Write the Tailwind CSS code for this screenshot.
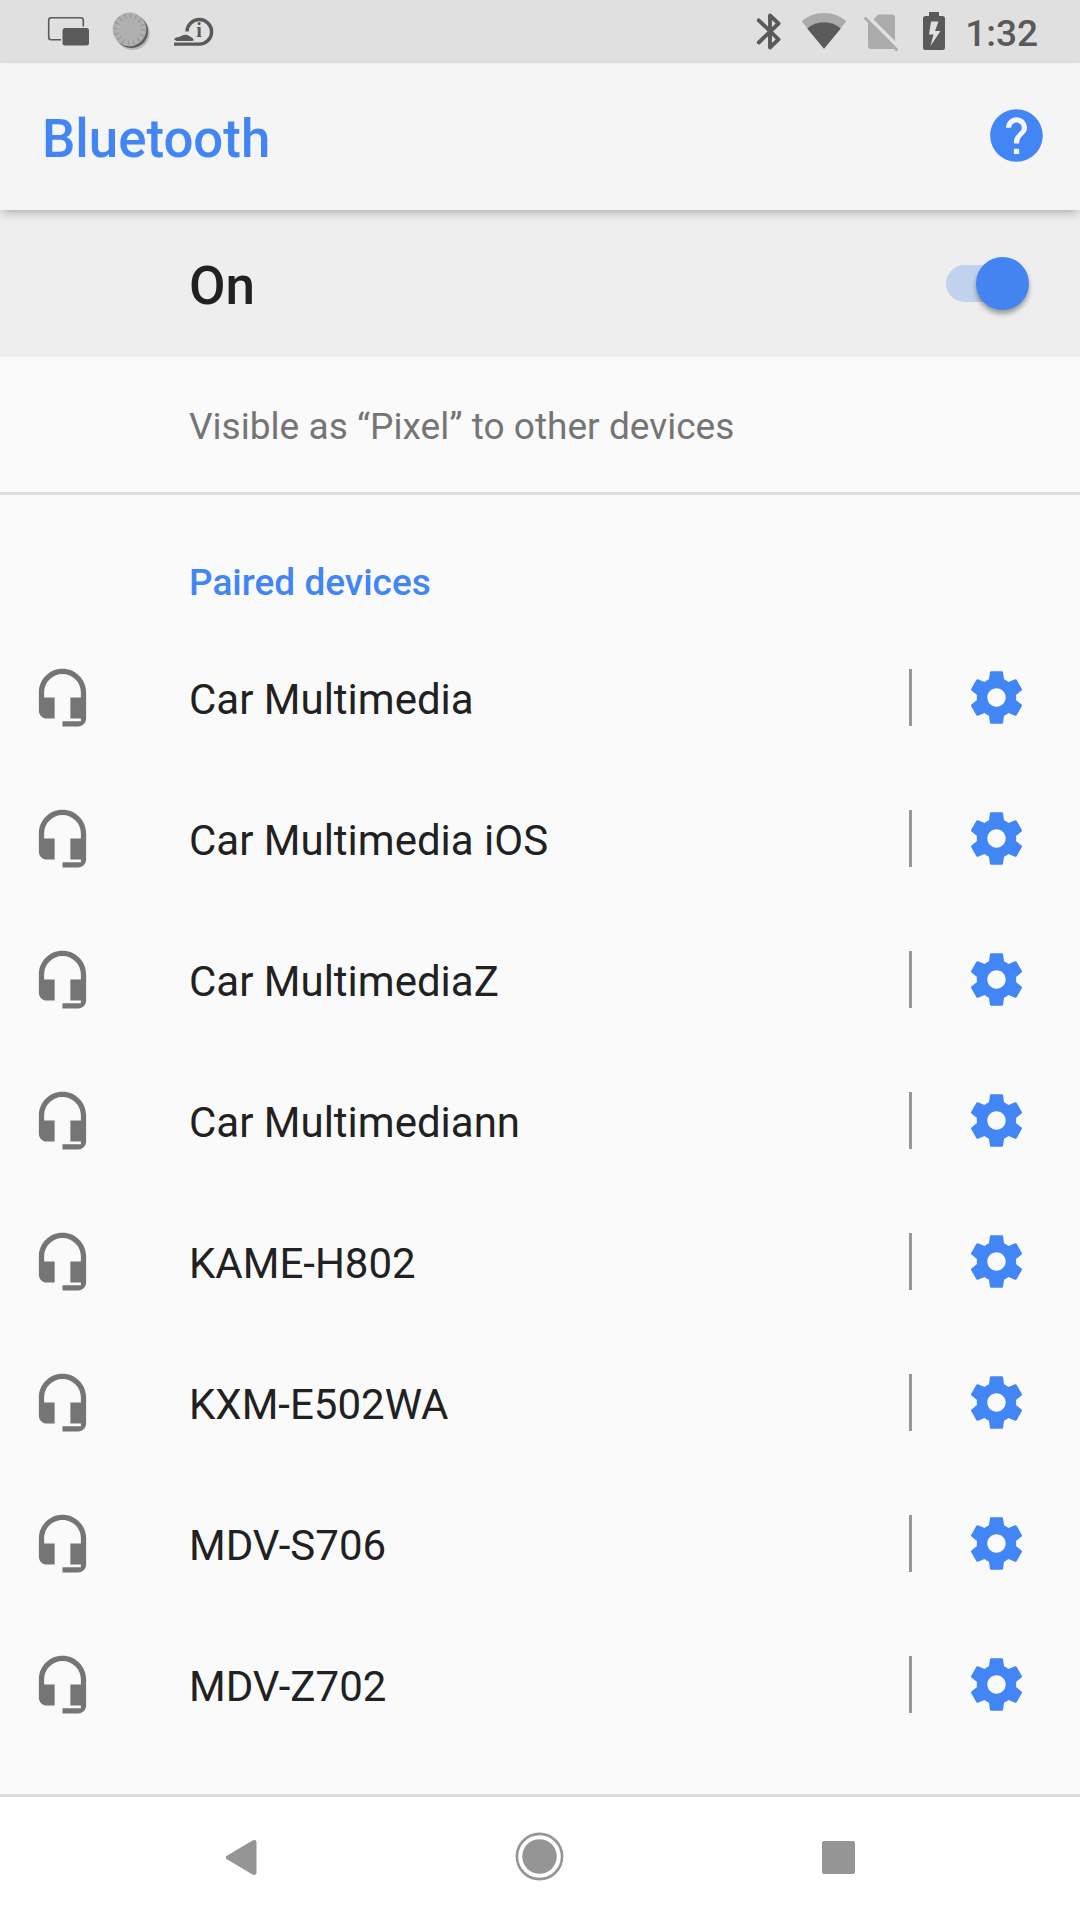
<!DOCTYPE html>
<html lang="en">
<head>
<meta charset="utf-8">
<title>Bluetooth</title>
<script src="https://cdn.jsdelivr.net/npm/@tailwindcss/browser@4"></script>
</head>
<body class="w-[1080px] h-[1920px] overflow-hidden flex flex-col bg-[#fafafa] font-[Roboto,sans-serif] text-[#212121]">
<svg class="hidden">
  <symbol id="headset" viewBox="0 0 24 24"><path d="M12 1c-4.97 0-9 4.03-9 9v7c0 1.66 1.34 3 3 3h3v-8H5v-2c0-3.87 3.13-7 7-7s7 3.13 7 7v2h-4v8h4v1h-7v2h6c1.66 0 3-1.34 3-3V10c0-4.97-4.03-9-9-9z"/></symbol>
  <symbol id="gear" viewBox="0 0 24 24"><path d="M19.43 12.98c.04-.32.07-.64.07-.98s-.03-.66-.07-.98l2.11-1.65c.19-.15.24-.42.12-.64l-2-3.46c-.12-.22-.39-.3-.61-.22l-2.49 1c-.52-.4-1.08-.73-1.69-.98l-.38-2.65C14.46 2.18 14.25 2 14 2h-4c-.25 0-.46.18-.49.42l-.38 2.65c-.61.25-1.17.59-1.69.98l-2.49-1c-.23-.09-.49 0-.61.22l-2 3.46c-.13.22-.07.49.12.64l2.11 1.65c-.04.32-.07.65-.07.98s.03.66.07.98l-2.11 1.65c-.19.15-.24.42-.12.64l2 3.46c.12.22.39.3.61.22l2.49-1c.52.4 1.08.73 1.69.98l.38 2.65c.03.24.24.42.49.42h4c.25 0 .46-.18.49-.42l.38-2.65c.61-.25 1.17-.59 1.69-.98l2.49 1c.23.09.49 0 .61-.22l2-3.46c.12-.22.07-.49-.12-.64l-2.11-1.65zM12 15.5c-1.93 0-3.5-1.57-3.5-3.5s1.57-3.5 3.5-3.5 3.5 1.57 3.5 3.5-1.57 3.5-3.5 3.5z"/></symbol>
</svg>

<header class="h-[63px] shrink-0 bg-[#e0e0e0] flex justify-between text-[#5a5a5a]">
  <svg class="w-[240px] h-[63px]" viewBox="0 0 240 63">
    <rect x="48.7" y="17.7" width="34.6" height="22" rx="2.5" fill="none" stroke="#5a5a5a" stroke-width="1.6"/>
    <rect x="61" y="26.5" width="29.5" height="20.5" rx="3.5" fill="#e0e0e0"/>
    <rect x="62.5" y="28" width="26.5" height="17.6" rx="2.5" fill="#5a5a5a"/>
    <circle cx="132.8" cy="33" r="17" fill="#b9b9b9"/>
    <circle cx="131.3" cy="31.3" r="16.8" fill="#5f5f5f"/>
    <circle cx="129.4" cy="29.4" r="16.8" fill="#b0b0b0"/>
    <circle cx="129.4" cy="29.4" r="13.6" fill="none" stroke="#989898" stroke-width="5" stroke-dasharray="1.3 4.04"/>
    <path d="M187 31.5a12.300 12.300 0 1 1 12.300 12.600H174" fill="none" stroke="#5a5a5a" stroke-width="3.4"/>
    <path d="M174.200 39.500c0-1.500 2.500-2.200 4.800-2.400l3.200-1.700c2.200-.9 5-.8 7 .5l2.500 1.500c1.200.6 2 1.400 1.800 3.300l-2 .4h-15z" fill="#5a5a5a"/>
    <text x="199" y="37.3" text-anchor="middle" class="font-['Liberation_Serif',serif] font-bold text-[20px]" fill="#5a5a5a">i</text>
  </svg>
  <svg class="w-[340px] h-[63px]" viewBox="0 0 340 63">
    <path d="M18.800 20.300 38.500 39.400 30 47.500V15.500L38.500 23.500 18.800 42.500" fill="none" stroke="#5a5a5a" stroke-width="3.9" stroke-linejoin="round" stroke-linecap="round"/>
    <path d="M84 48.800 61.700 21.300C67 16.500 75 13 84 13s17 3.500 22.300 8.300z" fill="#ababab"/>
    <path d="M84 48.800 67.200 28.500C72 24.500 77.500 22.300 84 22.300s12 2.200 16.800 6.200z" fill="#5a5a5a"/>
    <path d="M138 14.500h14q3 0 3 3V41L133.500 19.500zM128 21.500 154.500 48.500 152 49H131q-3 0-3-3z" fill="#ababab"/>
    <path d="M125.500 18.500 156.500 49.500" fill="none" stroke="#ababab" stroke-width="3" stroke-linecap="round"/>
    <path d="M189 12h10v4h3.500q2.500 0 2.500 2.500v29q0 2.500-2.500 2.500h-17q-2.500 0-2.500-2.500v-29q0-2.500 2.500-2.500h3.500zM191 21.500 189 34.500h4.500L190.500 46 200.500 31h-5.500L198.500 21.500z" fill="#5a5a5a" fill-rule="evenodd"/>
    <text x="225.3" y="46" class="font-medium text-[37px]" fill="#5a5a5a">1:32</text>
  </svg>
</header>

<div class="relative z-10 h-[147px] shrink-0 bg-[#f5f5f5] pl-[42px] pr-8 flex items-center justify-between shadow-[0_4px_10px_-2px_rgba(0,0,0,0.3)]">
  <h1 class="pt-[5px] text-[52.800px] leading-[53px] font-medium text-[#4285f4]">Bluetooth</h1>
  <svg class="size-[63px] -mt-[3px] fill-[#4285f4]" viewBox="0 0 24 24"><path d="M12 2C6.480 2 2 6.480 2 12s4.480 10 10 10 10-4.480 10-10S17.520 2 12 2zm1 17h-2v-2h2v2zm2.070-7.750l-.9.920C13.450 12.900 13 13.500 13 15h-2v-.5c0-1.100.45-2.100 1.170-2.830l1.240-1.260c.37-.36.59-.86.59-1.410 0-1.100-.9-2-2-2s-2 .9-2 2H8c0-2.210 1.790-4 4-4s4 1.790 4 4c0 .88-.36 1.680-.93 2.250z"/></svg>
</div>

<div class="h-[147px] shrink-0 bg-[#eee] pl-[189px] pr-[51px] flex items-center justify-between">
  <div class="pt-[5px] text-[53px] leading-[53px] font-medium">On</div>
  <div class="w-[83px] h-[53px] flex items-center justify-end">
    <div class="h-[37px] w-[60px] rounded-l-full bg-[#c1d2ef] -mr-[30px]"></div>
    <div class="size-[53px] rounded-full bg-[#4384f0] shadow-[0_4px_5px_rgba(0,0,0,0.35)]"></div>
  </div>
</div>

<div class="h-[138px] shrink-0 border-b-[3px] border-[#dcdcdc] pl-[189px] flex items-center">
  <p class="pt-1 text-[37.100px] leading-[37px] text-[#757575]">Visible as “Pixel” to other devices</p>
</div>

<main class="flex-1 flex flex-col">
  <h2 class="h-[132px] shrink-0 pt-[43px] pl-[189px] flex items-center text-[37px] leading-[37px] font-medium text-[#4285f4]">Paired devices</h2>
  <ul id="devices"></ul>
</main>
<template id="device">
  <li class="h-[141px] pl-[31px] pr-[52px] flex items-center">
    <svg class="size-[63px] fill-[#757575]"><use href="#headset"/></svg>
    <span class="flex-1 pl-[95px] pt-1 text-[42px] leading-none"></span>
    <span class="w-[3px] h-[57px] bg-[#979797] mr-[53px]"></span>
    <svg class="size-[63px] fill-[#4285f4]"><use href="#gear"/></svg>
  </li>
</template>

<nav class="h-[126px] shrink-0 border-t-[3px] border-[#dcdcdc] bg-white">
  <svg class="w-full h-[123px]" viewBox="0 1797 1080 123" fill="#959595">
    <path d="M226.500 1856q-1.500 1.500 0 3l26 15.500q4 1.500 4-2v-30q0-3.500-4-2z"/>
    <circle cx="539.5" cy="1856.500" r="22.6" fill="none" stroke="#959595" stroke-width="2.6"/>
    <circle cx="539.5" cy="1856.500" r="17.3"/>
    <rect x="822" y="1841" width="33" height="33" rx="2"/>
  </svg>
</nav>
<script>
const list = document.getElementById('devices'), tpl = document.getElementById('device');
['Car Multimedia','Car Multimedia iOS','Car MultimediaZ','Car Multimediann','KAME-H802','KXM-E502WA','MDV-S706','MDV-Z702'].forEach(name => {
  const row = tpl.content.cloneNode(true);
  row.querySelector('span').textContent = name;
  list.append(row);
});
</script>
</body>
</html>
